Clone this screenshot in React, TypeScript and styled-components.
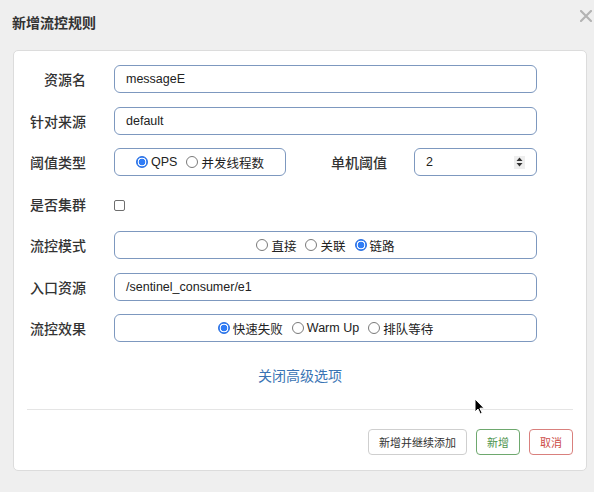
import React from "react";
import styled, { createGlobalStyle, css } from "styled-components";

const GlobalStyle = createGlobalStyle`
  html, body { margin: 0; padding: 0; background: #efefef; }
  body { font-family: "Liberation Sans", "Noto Sans CJK SC", sans-serif; color: #333; }
  * { box-sizing: border-box; }
`;

const Page = styled.div`
  position: relative;
  width: 594px;
  height: 492px;
  background: #efefef;
  overflow: hidden;
`;

const Header = styled.div`
  height: 50px;
  display: flex;
  justify-content: space-between;
  align-items: flex-start;
  padding: 14px 2px 0 12px;
`;

const Title = styled.h4`
  margin: 0;
  font-size: 14px;
  line-height: 18px;
  font-weight: 700;
  color: #333;
`;

const CloseButton = styled.button`
  border: none;
  background: none;
  padding: 0;
  margin-top: -4px;
  width: 12px;
  height: 12px;
  display: flex;
  cursor: pointer;
`;

const Card = styled.div`
  margin: 0 7px 0 13px;
  background: #fff;
  border: 1px solid #dcdcdc;
  border-radius: 5px;
  padding: 14px 13px 15px 13px;
`;

const Row = styled.div`
  display: grid;
  grid-template-columns: 59px 1fr;
  column-gap: 28px;
  align-items: center;
  height: 28px;
  padding-right: 36px;
  margin-bottom: 13.5px;
`;

const Label = styled.label`
  text-align: right;
  white-space: nowrap;
  font-size: 14px;
  font-weight: 500;
  color: #333;
`;

const fieldBox = css`
  height: 28px;
  border: 1px solid #7d98bf;
  border-radius: 6px;
  background: #fff;
`;

const TextInput = styled.div`
  ${fieldBox};
  display: flex;
  align-items: center;
  padding: 0 11px;
  font-size: 12.5px;
  color: #222;
`;

const RadioGroup = styled.div<{ $width?: number }>`
  ${fieldBox};
  display: flex;
  align-items: center;
  justify-content: center;
  gap: 9px;
  ${(p) => (p.$width ? `width: ${p.$width}px; flex: none;` : "")}
`;

const RadioOption = styled.span`
  display: inline-flex;
  align-items: center;
  gap: 3px;
  font-size: 12.5px;
  color: #222;
  white-space: nowrap;
`;

const RadioDot = styled.span<{ $checked?: boolean }>`
  width: 12px;
  height: 12px;
  border-radius: 50%;
  flex: none;
  ${(p) =>
    p.$checked
      ? css`
          border: 1px solid #2a6fe0;
          background: radial-gradient(circle, #2f7cf6 0 3.2px, #fff 3.6px 4.2px, #2f7cf6 4.6px);
        `
      : css`
          border: 1px solid #7a7a7a;
          background: #fff;
        `}
`;

const SplitControl = styled.div`
  display: flex;
  align-items: center;
`;

const SubLabel = styled(Label)`
  flex: 1;
  padding-right: 27px;
`;

const NumberInput = styled.div`
  ${fieldBox};
  width: 123px;
  display: flex;
  align-items: center;
  justify-content: space-between;
  padding: 0 11px 0 11px;
  font-size: 12.5px;
  color: #222;
`;

const Spinner = styled.span`
  width: 11px;
  height: 13px;
  background: #eeeeee;
  display: flex;
  align-items: center;
  justify-content: center;
`;

const CheckboxCell = styled.div`
  display: flex;
  align-items: center;
  height: 28px;
`;

const Checkbox = styled.span`
  display: block;
  width: 11px;
  height: 11px;
  border: 1px solid #6e6e6e;
  border-radius: 2px;
  background: #fff;
  margin-top: 3px;
`;

const ToggleLink = styled.a`
  display: block;
  text-align: center;
  font-size: 14px;
  line-height: 20px;
  color: #3a74b4;
  margin-top: 24px;
  text-decoration: none;
  cursor: pointer;
`;

const Divider = styled.hr`
  border: none;
  border-top: 1px solid #e5e5e5;
  margin: 23px 0 19px;
`;

const Footer = styled.div`
  display: flex;
  justify-content: flex-end;
  gap: 9px;
`;

const Button = styled.button<{ $variant?: "default" | "success" | "danger" }>`
  height: 26px;
  padding: 0 10px;
  border-radius: 4px;
  background: #fff;
  font-family: inherit;
  font-size: 11px;
  cursor: pointer;
  ${(p) =>
    p.$variant === "success"
      ? css`
          border: 1px solid #6ea86e;
          color: #4e944e;
        `
      : p.$variant === "danger"
      ? css`
          border: 1px solid #d9807d;
          color: #cc4b47;
        `
      : css`
          border: 1px solid #cfcfcf;
          color: #333;
        `}
`;

const Cursor = styled.svg`
  position: absolute;
  left: 474px;
  top: 398px;
`;

const Radio = ({ label, checked }: { label: string; checked?: boolean }) => (
  <RadioOption>
    <RadioDot $checked={checked} />
    {label}
  </RadioOption>
);

export default function App() {
  return (
    <Page>
      <GlobalStyle />
      <Header>
        <Title>新增流控规则</Title>
        <CloseButton aria-label="close">
          <svg width="12" height="12" viewBox="0 0 12 12">
            <path d="M1 1 L11 11 M11 1 L1 11" stroke="#b3b3b3" strokeWidth="2.2" strokeLinecap="round" />
          </svg>
        </CloseButton>
      </Header>
      <Card>
        <Row>
          <Label>资源名</Label>
          <TextInput>messageE</TextInput>
        </Row>
        <Row>
          <Label>针对来源</Label>
          <TextInput>default</TextInput>
        </Row>
        <Row>
          <Label>阈值类型</Label>
          <SplitControl>
            <RadioGroup $width={172}>
              <Radio label="QPS" checked />
              <Radio label="并发线程数" />
            </RadioGroup>
            <SubLabel>单机阈值</SubLabel>
            <NumberInput>
              2
              <Spinner>
                <svg width="7" height="10" viewBox="0 0 7 10">
                  <path d="M3.5 0.5 L6.5 4 L0.5 4 Z M0.5 6 L6.5 6 L3.5 9.5 Z" fill="#333" />
                </svg>
              </Spinner>
            </NumberInput>
          </SplitControl>
        </Row>
        <Row>
          <Label>是否集群</Label>
          <CheckboxCell>
            <Checkbox />
          </CheckboxCell>
        </Row>
        <Row>
          <Label>流控模式</Label>
          <RadioGroup>
            <Radio label="直接" />
            <Radio label="关联" />
            <Radio label="链路" checked />
          </RadioGroup>
        </Row>
        <Row>
          <Label>入口资源</Label>
          <TextInput>/sentinel_consumer/e1</TextInput>
        </Row>
        <Row>
          <Label>流控效果</Label>
          <RadioGroup>
            <Radio label="快速失败" checked />
            <Radio label="Warm Up" />
            <Radio label="排队等待" />
          </RadioGroup>
        </Row>
        <ToggleLink>关闭高级选项</ToggleLink>
        <Divider />
        <Footer>
          <Button>新增并继续添加</Button>
          <Button $variant="success">新增</Button>
          <Button $variant="danger">取消</Button>
        </Footer>
      </Card>
      <Cursor width="11" height="17" viewBox="0 0 11 17">
        <path d="M1 1 L1 14 L4 11 L6.3 16 L8.2 15.1 L5.9 10.2 L10 10.2 Z" fill="#000" stroke="#fff" strokeWidth="1" />
      </Cursor>
    </Page>
  );
}
